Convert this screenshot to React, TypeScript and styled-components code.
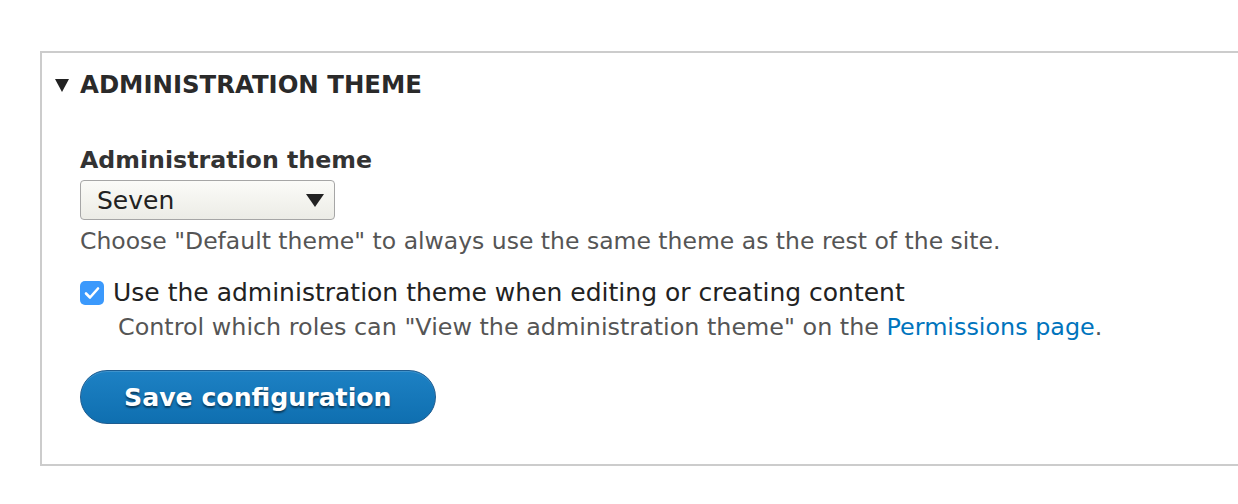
import React from 'react';
import styled, { createGlobalStyle } from 'styled-components';

const GlobalStyle = createGlobalStyle`
	html, body {
		margin: 0;
		padding: 0;
		background: #fff;
	}
	body {
		font-family: "DejaVu Sans", "Lucida Grande", sans-serif;
		color: #333;
		overflow: hidden;
	}
`;

const Page = styled.div`
	padding: 51px 0 0 40px;
`;

const Fieldset = styled.section`
	border: 2px solid #ccc;
	border-right: none;
	box-sizing: border-box;
	padding: 0 0 40px 38px;
`;

const Summary = styled.div`
	display: flex;
	align-items: center;
	gap: 11px;
	height: 62px;
	margin-left: -25px;
	font-size: 24.4px;
	font-weight: bold;
	text-transform: uppercase;
	color: #2a2a2a;
`;

const Caret = styled.span`
	width: 0;
	height: 0;
	border-left: 7px solid transparent;
	border-right: 7px solid transparent;
	border-top: 13px solid #222;
	margin-top: 2px;
`;

const Body = styled.div`
	padding-top: 30px;
	display: flex;
	flex-direction: column;
	align-items: flex-start;
`;

const Label = styled.label`
	font-size: 23.7px;
	font-weight: bold;
	line-height: 30px;
	color: #333;
	margin-bottom: 5px;
`;

const Select = styled.div`
	box-sizing: border-box;
	width: 255px;
	height: 40px;
	border: 1px solid #a6a6a6;
	border-radius: 4px;
	background: linear-gradient(#fbfbf8, #ececE6);
	display: flex;
	align-items: center;
	justify-content: space-between;
	padding: 0 10px 0 16px;
	font-size: 25px;
	color: #222;
`;

const SelectArrow = styled.span`
	width: 0;
	height: 0;
	border-left: 9px solid transparent;
	border-right: 9px solid transparent;
	border-top: 13px solid #222;
`;

const Description = styled.div<{ indent?: number; gap: number; size: number }>`
	font-size: ${(p) => p.size}px;
	line-height: 30px;
	color: #555;
	margin-top: ${(p) => p.gap}px;
	margin-left: ${(p) => p.indent || 0}px;
	white-space: nowrap;
`;

const CheckRow = styled.div`
	display: flex;
	align-items: center;
	gap: 9px;
	margin-top: 23px;
	font-size: 25px;
	line-height: 28px;
	color: #222;
	white-space: nowrap;
`;

const Checkbox = styled.span`
	width: 24px;
	height: 24px;
	border-radius: 5px;
	background: #3b99fc;
	display: flex;
	align-items: center;
	justify-content: center;
`;

const Link = styled.a`
	color: #0074bd;
	text-decoration: none;
`;

const Button = styled.button`
	margin-top: 28px;
	height: 54px;
	padding: 0 43px;
	border: 1px solid #1e5c90;
	border-radius: 27px;
	background: linear-gradient(#1d81c4, #0f6fb0);
	color: #fff;
	font-family: inherit;
	font-size: 25.2px;
	font-weight: bold;
	text-shadow: 0 2px 2px rgba(0, 0, 0, 0.5);
	box-shadow: inset 0 1px 0 rgba(255, 255, 255, 0.15);
`;

const App = () => (
	<Page>
		<GlobalStyle />
		<Fieldset>
			<Summary>
				<Caret />
				Administration theme
			</Summary>
			<Body>
				<Label>Administration theme</Label>
				<Select>
					Seven
					<SelectArrow />
				</Select>
				<Description gap={6} size={23.5}>
					Choose "Default theme" to always use the same theme as the rest of the site.
				</Description>
				<CheckRow>
					<Checkbox>
						<svg width="16" height="14" viewBox="0 0 16 14">
							<path d="M2 7.5 L6 11.5 L14 2.5" fill="none" stroke="#fff" strokeWidth="2.6" strokeLinecap="round" strokeLinejoin="round" />
						</svg>
					</Checkbox>
					Use the administration theme when editing or creating content
				</CheckRow>
				<Description gap={5} indent={38} size={23.85}>
					Control which roles can "View the administration theme" on the <Link href="#">Permissions page</Link>.
				</Description>
				<Button>Save configuration</Button>
			</Body>
		</Fieldset>
	</Page>
);

export default App;
